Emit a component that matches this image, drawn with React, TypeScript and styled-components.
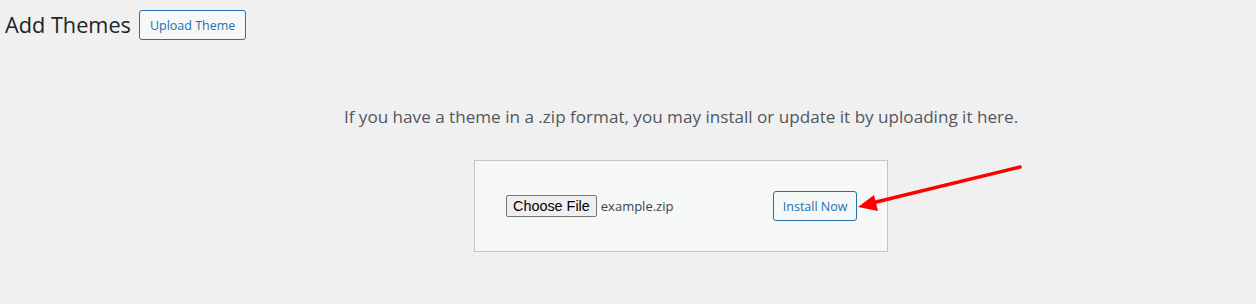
import React from 'react';
import styled, { createGlobalStyle } from 'styled-components';

const GlobalStyle = createGlobalStyle`
  body {
    margin: 0;
    background: #f0f0f1;
    font-family: "Open Sans", "Noto Sans", sans-serif;
    color: #1d2327;
  }
`;

const Page = styled.div`
  position: relative;
  width: 1256px;
  height: 304px;
  overflow: hidden;
`;

const Header = styled.div`
  display: flex;
  align-items: center;
  gap: 8px;
  padding: 10px 0 0 5px;
  height: 30px;
`;

const Title = styled.h1`
  margin: 0;
  font-size: 21.7px;
  font-weight: 400;
  line-height: 30px;
  color: #1d2327;
`;

const OutlineButton = styled.button<{ $pad?: number }>`
  height: 30px;
  padding: 0 ${(p) => p.$pad ?? 10}px;
  border: 1px solid #2271b1;
  border-radius: 3px;
  background: #f6f7f7;
  color: #2271b1;
  font-family: inherit;
  font-size: 12.5px;
  line-height: 2;
  cursor: pointer;
`;

const Content = styled.div`
  padding-left: 106px;
  display: flex;
  flex-direction: column;
  align-items: center;
`;

const Help = styled.p`
  margin: 65px 0 31px;
  font-size: 17.1px;
  line-height: 24px;
  color: #50575e;
`;

const UploadBox = styled.form`
  width: 351px;
  padding: 30px 30px 30px 31px;
  border: 1px solid #c3c4c7;
  background: #f6f7f7;
  display: flex;
  align-items: center;
  justify-content: space-between;
`;

const FileField = styled.label`
  display: flex;
  align-items: center;
  gap: 4px;
  font-size: 13px;
  color: #3c434a;
`;

const ChooseButton = styled.span`
  display: inline-block;
  padding: 1px 6px;
  border: 1px solid #767676;
  border-radius: 2px;
  background: #efefef;
  color: #000;
  font-family: "Liberation Sans", Arial, sans-serif;
  font-size: 14.4px;
  line-height: 18px;
`;

const Arrow = styled.svg`
  position: absolute;
  left: 850px;
  top: 160px;
`;

export default function App() {
  return (
    <Page>
      <GlobalStyle />
      <Header>
        <Title>Add Themes</Title>
        <OutlineButton>Upload Theme</OutlineButton>
      </Header>
      <Content>
        <Help>If you have a theme in a .zip format, you may install or update it by uploading it here.</Help>
        <UploadBox>
          <FileField>
            <ChooseButton>Choose File</ChooseButton>
            example.zip
          </FileField>
          <OutlineButton type="button" $pad={8.5}>Install Now</OutlineButton>
        </UploadBox>
      </Content>
      <Arrow width="180" height="60" viewBox="0 0 180 60">
        <line x1="170" y1="7" x2="22" y2="43" stroke="#f00" strokeWidth="3.5" strokeLinecap="round" />
        <polygon points="8,47 24,35 28,51" fill="#f00" />
      </Arrow>
    </Page>
  );
}
